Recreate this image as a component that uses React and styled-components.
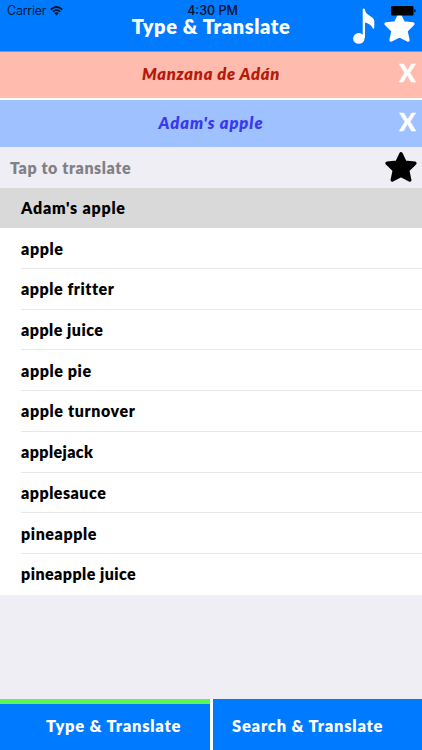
import React from 'react';
import styled, { createGlobalStyle } from 'styled-components';

const Global = createGlobalStyle`
  *{box-sizing:border-box}
  html,body{margin:0;overflow:hidden}
  body{font-family:Lato,"Noto Sans",sans-serif;font-weight:800;color:#000}
  button{font:inherit;border:0;padding:0;margin:0;background:none;color:inherit}
`;
const Screen = styled.main`
  width:422px;height:750px;background:#efeef4;display:flex;flex-direction:column;
`;
const Header = styled.header`
  height:51.5px;flex:none;background:#007aff;display:grid;
  grid-template-rows:22px 1fr;border-bottom:1px solid #5c9cf0;
`;
const StatusBar = styled.div`
  display:grid;grid-template-columns:1fr auto 1fr;align-items:center;z-index:1;
  padding:0 6px 0 7px;font:400 12.5px/22px Inter,sans-serif;color:#001b3d;
`;
const Carrier = styled.span`display:flex;align-items:center;gap:4px;letter-spacing:-.25px;`;
const Clock = styled.time`font-weight:500;color:#001128;letter-spacing:0;padding-left:2px;`;
const Battery = styled.svg`justify-self:end;width:25px;height:10px;`;
const TitleBar = styled.div`
  display:grid;grid-template-columns:1fr auto 1fr;
`;
const Title = styled.h1`
  grid-column:2;margin:0;font-size:20px;line-height:24px;font-weight:800;
  color:#fff;letter-spacing:.6px;margin-top:-8px;
`;
const Actions = styled.div`
  display:flex;justify-content:flex-end;align-items:flex-start;gap:9px;
  padding-right:7px;margin-top:-14px;
`;
const Icon = styled.svg`
  display:block;flex:none;width:${p => p.$w}px;height:${p => p.$h}px;margin-top:${p => p.$top || 0}px;
`;
const Phrase = styled.section`
  height:${p => p.$h}px;flex:none;display:grid;grid-template-columns:40px 1fr 40px;
  align-items:center;background:${p => p.$bg};color:${p => p.$fg};
  border-bottom:${p => p.$line || 0}px solid #fff;
`;
const PhraseText = styled.span`
  grid-column:2;text-align:center;font-size:16.5px;line-height:22px;font-style:italic;
  letter-spacing:${p => p.$ls}px;padding-bottom:1px;
`;
const Clear = styled.button`
  justify-self:end;width:29px;text-align:center;color:#fff;
  font-size:24px;line-height:24px;font-weight:900;padding-bottom:4px;
  -webkit-text-stroke:.4px #fff;
`;
const SearchBar = styled.div`
  height:40.5px;flex:none;display:flex;align-items:center;justify-content:space-between;
  padding:0 5px 0 10px;color:#808085;font-size:16px;letter-spacing:.57px;
`;
const List = styled.ul`margin:0;padding:0;list-style:none;background:#fff;flex:none;`;
const Row = styled.li`
  height:40.73px;padding-left:21px;display:flex;background:${p => p.$on ? '#d9d9d9' : '#fff'};
`;
const Word = styled.span`
  flex:1;display:flex;align-items:center;font-size:16px;letter-spacing:${p => p.$ls}px;
  border-bottom:1px solid ${p => p.$line ? '#e8e8ea' : 'transparent'};
`;
const Tabs = styled.nav`
  margin-top:auto;height:51.5px;display:grid;grid-template-columns:210px 209px;gap:3px;background:#fff;
`;
const Tab = styled.button`
  background:#007aff;color:#fff;font-size:16.5px;line-height:22px;text-align:left;
  border-top:5.5px solid ${p => p.$on ? '#5cf752' : '#007aff'};
  padding:0 0 2px ${p => p.$left}px;letter-spacing:${p => p.$ls}px;
`;

const words = [
  ["Adam's apple", .77], ['apple', .6], ['apple fritter', .54], ['apple juice', .48],
  ['apple pie', .6], ['apple turnover', .63], ['applejack', .4], ['applesauce', .5],
  ['pineapple', .58], ['pineapple juice', .46],
];

const Star = ({ size, color, top }) => (
  <Icon $w={size} $h={size} $top={top} viewBox="0 0 30 30">
    <path d="M15 2.6 18.8 10.6 28 11.5 21.3 18.2 23.2 27.2 15 22.9 6.8 27.2 8.7 18.2 2 11.5 11.2 10.6Z"
      fill={color} stroke={color} strokeWidth="3.2" strokeLinejoin="round" />
  </Icon>
);

export default function App() {
  return (
    <>
      <Global />
      <Screen>
        <Header>
          <StatusBar>
            <Carrier>
              Carrier
              <svg width="13" height="10" viewBox="0 0 13 10" fill="none" stroke="#001128" strokeWidth="1.7">
                <path d="M.8 3.5Q6.5-1.5 12.2 3.5M2.8 5.7Q6.5 2.5 10.2 5.7" />
                <path d="M4.3 7.1Q6.5 5.4 8.7 7.1L6.5 9.5Z" fill="#001128" stroke="none" />
              </svg>
            </Carrier>
            <Clock>4:30 PM</Clock>
            <Battery viewBox="0 0 25 10">
              <rect width="22.5" height="9.5" rx="1.3" />
              <path d="M23.3 3v3.6q1.4-.5 1.4-1.8T23.3 3Z" />
            </Battery>
          </StatusBar>
          <TitleBar>
            <Title>Type &amp; Translate</Title>
            <Actions>
              <Icon $w={22} $h={37} viewBox="0 0 22 37" fill="#fff">
                <ellipse cx="5.8" cy="30.4" rx="5.7" ry="5.3" />
                <path d="M9.7 1.3Q10.8-.2 12 1.3 12 4.2 14 5.8L19.5 9.7Q21.3 11.2 21.3 13V20Q20.6 21.4 19.6 20.2 18.3 16.4 12 14.6V30H9.7Z" />
              </Icon>
              <Star size={31} color="#fff" top={3.5} />
            </Actions>
          </TitleBar>
        </Header>
        <Phrase $h={48.5} $line={2} $bg="#ffbcae" $fg="#b51b0b">
          <PhraseText $ls={.7}>Manzana de Adán</PhraseText><Clear>X</Clear>
        </Phrase>
        <Phrase $h={47} $bg="#9fc1ff" $fg="#3b39ef">
          <PhraseText $ls={.93}>Adam's apple</PhraseText><Clear>X</Clear>
        </Phrase>
        <SearchBar><span>Tap to translate</span><Star size={32} color="#000" /></SearchBar>
        <List>
          {words.map(([word, ls], i) => (
            <Row key={word} $on={i === 0}>
              <Word $ls={ls} $line={i > 0 && i < words.length - 1}>{word}</Word>
            </Row>
          ))}
        </List>
        <Tabs>
          <Tab $on $left={46} $ls={.76}>Type &amp; Translate</Tab>
          <Tab $left={19} $ls={.78}>Search &amp; Translate</Tab>
        </Tabs>
      </Screen>
    </>
  );
}
